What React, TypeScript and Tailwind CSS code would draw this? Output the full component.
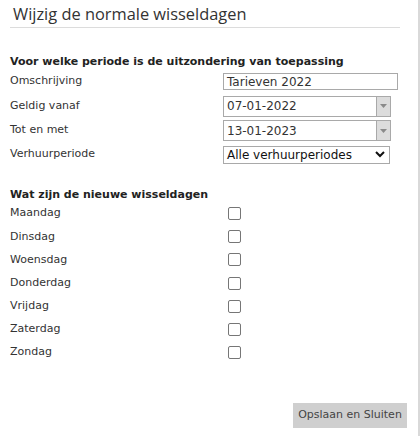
const days = ['Maandag', 'Dinsdag', 'Woensdag', 'Donderdag', 'Vrijdag', 'Zaterdag', 'Zondag'];

function DateField({ value }: { value: string }) {
  return (
    <div className="flex h-[21px] w-[168px] border border-[#a9a9a9] bg-white">
      <div className="flex flex-1 items-center pl-[3px] text-[12px] text-[#333]">{value}</div>
      <div className="flex w-[14px] items-center justify-center border-l border-[#a9a9a9] bg-[#dcdcdc]">
        <svg width="7" height="4" viewBox="0 0 7 4">
          <path d="M0 0h7L3.5 4z" fill="#8a8a8a" />
        </svg>
      </div>
    </div>
  );
}

function Row({ label, h, children }: { label: string; h: string; children: React.ReactNode }) {
  return (
    <div className={`flex items-center ${h}`}>
      <div className="w-[213px]">{label}</div>
      {children}
    </div>
  );
}

export default function App() {
  return (
    <div className="flex h-[436px] w-[420px] bg-white text-[11px] text-[#333]" style={{ fontFamily: '"DejaVu Sans", Verdana, sans-serif' }}>
      <div className="relative flex-1">
        <div className="ml-[10px] w-[390px] border-b border-[#dcdcdc] pb-[3px] pl-[3px] pt-[3px] text-[16.4px] leading-[21px] text-[#333]" style={{ fontFamily: '"Open Sans", sans-serif' }}>
          Wijzig de normale wisseldagen
        </div>

        <div className="pl-[10px] pt-[27px]">
          <div className="h-[14px] font-bold leading-[14px] text-[#222]">Voor welke periode is de uitzondering van toepassing</div>
          <div>
            <Row label="Omschrijving" h="h-[25px]">
              <div className="flex h-[17px] w-[175px] items-center border border-[#a9a9a9] pl-[3px] text-[12px] text-[#333]">Tarieven 2022</div>
            </Row>
            <Row label="Geldig vanaf" h="h-[24px]">
              <DateField value="07-01-2022" />
            </Row>
            <Row label="Tot en met" h="h-[25px]">
              <DateField value="13-01-2023" />
            </Row>
            <Row label="Verhuurperiode" h="h-[23px]">
              <div className="flex h-[18px] w-[167px] items-center justify-between border border-[#a9a9a9] pl-[3px] pr-[4px] text-[12px] text-[#111]">
                <span>Alle verhuurperiodes</span>
                <svg width="10" height="7" viewBox="0 0 10 7">
                  <path d="M1 1l4 4 4-4" fill="none" stroke="#111" strokeWidth="2" />
                </svg>
              </div>
            </Row>
          </div>

          <div className="mt-[22px] h-[14px] font-bold leading-[14px] text-[#222]">Wat zijn de nieuwe wisseldagen</div>
          <div>
            {days.map((d) => (
              <div key={d} className="flex h-[23.2px] items-center">
                <div className="w-[218px]">{d}</div>
                <div className="h-[13px] w-[13px] rounded-[2px] border border-[#767676] bg-white" />
              </div>
            ))}
          </div>
        </div>

        <div className="absolute bottom-[8px] right-[11px] flex h-[25px] w-[114px] items-center justify-center bg-[#cfcfcf] text-[11px] text-[#444]">
          Opslaan en Sluiten
        </div>
      </div>
      <div className="w-[2px] bg-[#d9d9d9]" />
    </div>
  );
}
